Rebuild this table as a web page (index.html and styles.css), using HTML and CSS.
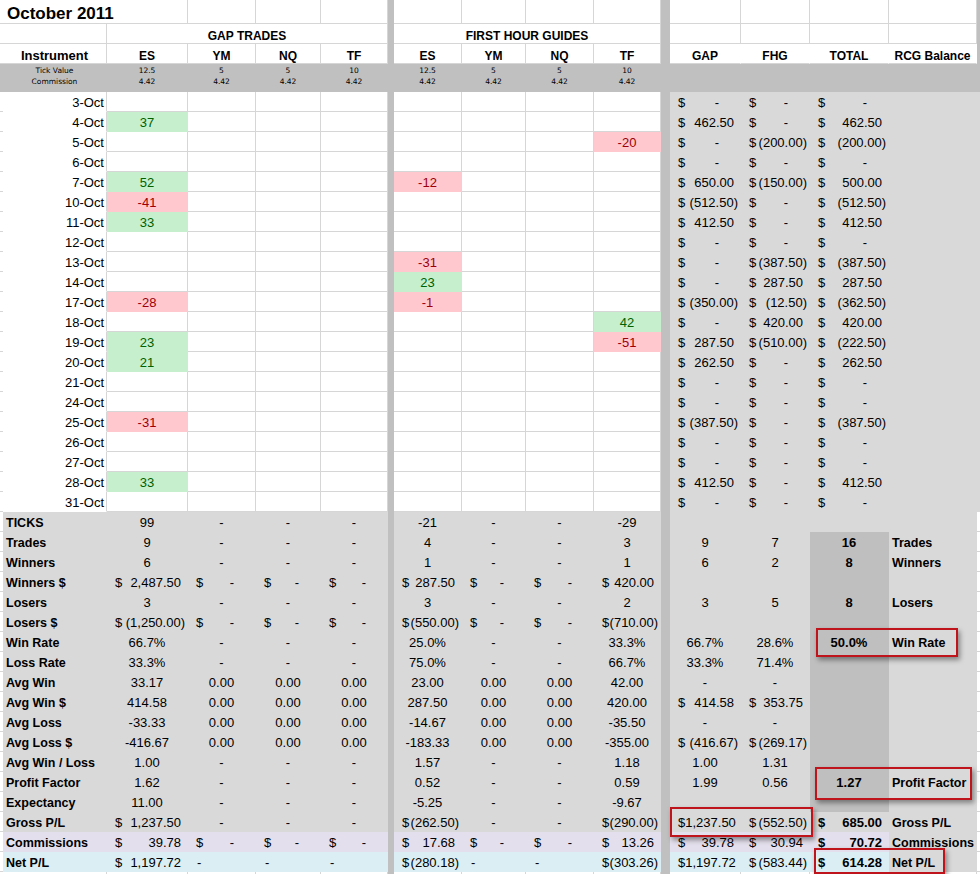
FILE: index.html
```html
<!DOCTYPE html>
<html lang="en">
<head>
<meta charset="utf-8">
<title>October 2011</title>
<link rel="stylesheet" href="styles.css">
</head>
<body>
<div class="wrap">
<div class="sheet">
<div class="sep sepG"></div><div class="sep sepL"></div>

<div class="r h1"><div></div><div class="title">October 2011</div><div></div><div></div><div></div><div></div><div></div><div></div><div></div><div></div><div></div><div></div><div></div><div class="q"></div></div>
<div class="r h2"><div></div><div></div><div class="hb sp4">GAP TRADES</div><div class="hb sp4">FIRST HOUR GUIDES</div><div></div><div></div><div></div><div></div><div class="q"></div></div>
<div class="r h3"><div></div><div class="hb ins">Instrument</div><div class="hb">ES</div><div class="hb">YM</div><div class="hb">NQ</div><div class="hb">TF</div><div class="hb">ES</div><div class="hb">YM</div><div class="hb">NQ</div><div class="hb">TF</div><div class="hb nv">GAP</div><div class="hb nv">FHG</div><div class="hb nv">TOTAL</div><div class="hb nv">RCG Balance</div><div class="q"></div></div>
<div class="r tk"><div></div><div>Tick Value<br>Commission</div><div>12.5<br>4.42</div><div>5<br>4.42</div><div>5<br>4.42</div><div>10<br>4.42</div><div>12.5<br>4.42</div><div>5<br>4.42</div><div>5<br>4.42</div><div>10<br>4.42</div><div class="sp5"></div></div>

<div class="r dr"><div></div><div>3-Oct</div><div></div><div></div><div></div><div></div><div></div><div></div><div></div><div></div><div class="a"><span>$</span><span class="z">-</span></div><div class="a"><span>$</span><span class="z">-</span></div><div class="a"><span>$</span><span class="z">-</span></div><div></div></div>
<div class="r dr"><div></div><div>4-Oct</div><div class="u">37</div><div></div><div></div><div></div><div></div><div></div><div></div><div></div><div class="a"><span>$</span><span class="p">462.50</span></div><div class="a"><span>$</span><span class="z">-</span></div><div class="a"><span>$</span><span class="p">462.50</span></div><div></div></div>
<div class="r dr"><div></div><div>5-Oct</div><div></div><div></div><div></div><div></div><div></div><div></div><div></div><div class="n">-20</div><div class="a"><span>$</span><span class="z">-</span></div><div class="a"><span>$</span><span>(200.00)</span></div><div class="a"><span>$</span><span>(200.00)</span></div><div></div></div>
<div class="r dr"><div></div><div>6-Oct</div><div></div><div></div><div></div><div></div><div></div><div></div><div></div><div></div><div class="a"><span>$</span><span class="z">-</span></div><div class="a"><span>$</span><span class="z">-</span></div><div class="a"><span>$</span><span class="z">-</span></div><div></div></div>
<div class="r dr"><div></div><div>7-Oct</div><div class="u">52</div><div></div><div></div><div></div><div class="n">-12</div><div></div><div></div><div></div><div class="a"><span>$</span><span class="p">650.00</span></div><div class="a"><span>$</span><span>(150.00)</span></div><div class="a"><span>$</span><span class="p">500.00</span></div><div></div></div>
<div class="r dr"><div></div><div>10-Oct</div><div class="n">-41</div><div></div><div></div><div></div><div></div><div></div><div></div><div></div><div class="a"><span>$</span><span>(512.50)</span></div><div class="a"><span>$</span><span class="z">-</span></div><div class="a"><span>$</span><span>(512.50)</span></div><div></div></div>
<div class="r dr"><div></div><div>11-Oct</div><div class="u">33</div><div></div><div></div><div></div><div></div><div></div><div></div><div></div><div class="a"><span>$</span><span class="p">412.50</span></div><div class="a"><span>$</span><span class="z">-</span></div><div class="a"><span>$</span><span class="p">412.50</span></div><div></div></div>
<div class="r dr"><div></div><div>12-Oct</div><div></div><div></div><div></div><div></div><div></div><div></div><div></div><div></div><div class="a"><span>$</span><span class="z">-</span></div><div class="a"><span>$</span><span class="z">-</span></div><div class="a"><span>$</span><span class="z">-</span></div><div></div></div>
<div class="r dr"><div></div><div>13-Oct</div><div></div><div></div><div></div><div></div><div class="n">-31</div><div></div><div></div><div></div><div class="a"><span>$</span><span class="z">-</span></div><div class="a"><span>$</span><span>(387.50)</span></div><div class="a"><span>$</span><span>(387.50)</span></div><div></div></div>
<div class="r dr"><div></div><div>14-Oct</div><div></div><div></div><div></div><div></div><div class="u">23</div><div></div><div></div><div></div><div class="a"><span>$</span><span class="z">-</span></div><div class="a"><span>$</span><span class="p">287.50</span></div><div class="a"><span>$</span><span class="p">287.50</span></div><div></div></div>
<div class="r dr"><div></div><div>17-Oct</div><div class="n">-28</div><div></div><div></div><div></div><div class="n">-1</div><div></div><div></div><div></div><div class="a"><span>$</span><span>(350.00)</span></div><div class="a"><span>$</span><span>(12.50)</span></div><div class="a"><span>$</span><span>(362.50)</span></div><div></div></div>
<div class="r dr"><div></div><div>18-Oct</div><div></div><div></div><div></div><div></div><div></div><div></div><div></div><div class="u">42</div><div class="a"><span>$</span><span class="z">-</span></div><div class="a"><span>$</span><span class="p">420.00</span></div><div class="a"><span>$</span><span class="p">420.00</span></div><div></div></div>
<div class="r dr"><div></div><div>19-Oct</div><div class="u">23</div><div></div><div></div><div></div><div></div><div></div><div></div><div class="n">-51</div><div class="a"><span>$</span><span class="p">287.50</span></div><div class="a"><span>$</span><span>(510.00)</span></div><div class="a"><span>$</span><span>(222.50)</span></div><div></div></div>
<div class="r dr"><div></div><div>20-Oct</div><div class="u">21</div><div></div><div></div><div></div><div></div><div></div><div></div><div></div><div class="a"><span>$</span><span class="p">262.50</span></div><div class="a"><span>$</span><span class="z">-</span></div><div class="a"><span>$</span><span class="p">262.50</span></div><div></div></div>
<div class="r dr"><div></div><div>21-Oct</div><div></div><div></div><div></div><div></div><div></div><div></div><div></div><div></div><div class="a"><span>$</span><span class="z">-</span></div><div class="a"><span>$</span><span class="z">-</span></div><div class="a"><span>$</span><span class="z">-</span></div><div></div></div>
<div class="r dr"><div></div><div>24-Oct</div><div></div><div></div><div></div><div></div><div></div><div></div><div></div><div></div><div class="a"><span>$</span><span class="z">-</span></div><div class="a"><span>$</span><span class="z">-</span></div><div class="a"><span>$</span><span class="z">-</span></div><div></div></div>
<div class="r dr"><div></div><div>25-Oct</div><div class="n">-31</div><div></div><div></div><div></div><div></div><div></div><div></div><div></div><div class="a"><span>$</span><span>(387.50)</span></div><div class="a"><span>$</span><span class="z">-</span></div><div class="a"><span>$</span><span>(387.50)</span></div><div></div></div>
<div class="r dr"><div></div><div>26-Oct</div><div></div><div></div><div></div><div></div><div></div><div></div><div></div><div></div><div class="a"><span>$</span><span class="z">-</span></div><div class="a"><span>$</span><span class="z">-</span></div><div class="a"><span>$</span><span class="z">-</span></div><div></div></div>
<div class="r dr"><div></div><div>27-Oct</div><div></div><div></div><div></div><div></div><div></div><div></div><div></div><div></div><div class="a"><span>$</span><span class="z">-</span></div><div class="a"><span>$</span><span class="z">-</span></div><div class="a"><span>$</span><span class="z">-</span></div><div></div></div>
<div class="r dr"><div></div><div>28-Oct</div><div class="u">33</div><div></div><div></div><div></div><div></div><div></div><div></div><div></div><div class="a"><span>$</span><span class="p">412.50</span></div><div class="a"><span>$</span><span class="z">-</span></div><div class="a"><span>$</span><span class="p">412.50</span></div><div></div></div>
<div class="r dr"><div></div><div>31-Oct</div><div></div><div></div><div></div><div></div><div></div><div></div><div></div><div></div><div class="a"><span>$</span><span class="z">-</span></div><div class="a"><span>$</span><span class="z">-</span></div><div class="a"><span>$</span><span class="z">-</span></div><div></div></div>

<div class="r s"><div></div><div>TICKS</div><div>99</div><div>-</div><div>-</div><div>-</div><div>-21</div><div>-</div><div>-</div><div>-29</div><div></div><div></div><div></div><div></div><div></div></div>
<div class="r s dk"><div></div><div>Trades</div><div>9</div><div>-</div><div>-</div><div>-</div><div>4</div><div>-</div><div>-</div><div>3</div><div>9</div><div>7</div><div>16</div><div>Trades</div><div></div></div>
<div class="r s dk"><div></div><div>Winners</div><div>6</div><div>-</div><div>-</div><div>-</div><div>1</div><div>-</div><div>-</div><div>1</div><div>6</div><div>2</div><div>8</div><div>Winners</div><div></div></div>
<div class="r s dk"><div></div><div>Winners $</div><div class="a"><span>$</span><span class="p">2,487.50</span></div><div class="a"><span>$</span><span class="z">-</span></div><div class="a"><span>$</span><span class="z">-</span></div><div class="a"><span>$</span><span class="z">-</span></div><div class="a"><span>$</span><span class="p">287.50</span></div><div class="a"><span>$</span><span class="z">-</span></div><div class="a"><span>$</span><span class="z">-</span></div><div class="a"><span>$</span><span class="p">420.00</span></div><div></div><div></div><div></div><div></div><div></div></div>
<div class="r s dk"><div></div><div>Losers</div><div>3</div><div>-</div><div>-</div><div>-</div><div>3</div><div>-</div><div>-</div><div>2</div><div>3</div><div>5</div><div>8</div><div>Losers</div><div></div></div>
<div class="r s dk"><div></div><div>Losers $</div><div class="a"><span>$</span><span>(1,250.00)</span></div><div class="a"><span>$</span><span class="z">-</span></div><div class="a"><span>$</span><span class="z">-</span></div><div class="a"><span>$</span><span class="z">-</span></div><div class="a"><span>$</span><span>(550.00)</span></div><div class="a"><span>$</span><span class="z">-</span></div><div class="a"><span>$</span><span class="z">-</span></div><div class="a"><span>$</span><span>(710.00)</span></div><div></div><div></div><div></div><div></div><div></div></div>
<div class="r s dk"><div></div><div>Win Rate</div><div>66.7%</div><div>-</div><div>-</div><div>-</div><div>25.0%</div><div>-</div><div>-</div><div>33.3%</div><div>66.7%</div><div>28.6%</div><div>50.0%</div><div>Win Rate</div><div></div></div>
<div class="r s dk"><div></div><div>Loss Rate</div><div>33.3%</div><div>-</div><div>-</div><div>-</div><div>75.0%</div><div>-</div><div>-</div><div>66.7%</div><div>33.3%</div><div>71.4%</div><div></div><div></div><div></div></div>
<div class="r s dk"><div></div><div>Avg Win</div><div>33.17</div><div>0.00</div><div>0.00</div><div>0.00</div><div>23.00</div><div>0.00</div><div>0.00</div><div>42.00</div><div>-</div><div>-</div><div></div><div></div><div></div></div>
<div class="r s dk"><div></div><div>Avg Win $</div><div>414.58</div><div>0.00</div><div>0.00</div><div>0.00</div><div>287.50</div><div>0.00</div><div>0.00</div><div>420.00</div><div class="a"><span>$</span><span class="p">414.58</span></div><div class="a"><span>$</span><span class="p">353.75</span></div><div></div><div></div><div></div></div>
<div class="r s dk"><div></div><div>Avg Loss</div><div>-33.33</div><div>0.00</div><div>0.00</div><div>0.00</div><div>-14.67</div><div>0.00</div><div>0.00</div><div>-35.50</div><div>-</div><div>-</div><div></div><div></div><div></div></div>
<div class="r s dk"><div></div><div>Avg Loss $</div><div>-416.67</div><div>0.00</div><div>0.00</div><div>0.00</div><div>-183.33</div><div>0.00</div><div>0.00</div><div>-355.00</div><div class="a"><span>$</span><span>(416.67)</span></div><div class="a"><span>$</span><span>(269.17)</span></div><div></div><div></div><div></div></div>
<div class="r s dk"><div></div><div>Avg Win / Loss</div><div>1.00</div><div>-</div><div>-</div><div>-</div><div>1.57</div><div>-</div><div>-</div><div>1.18</div><div>1.00</div><div>1.31</div><div></div><div></div><div></div></div>
<div class="r s dk"><div></div><div>Profit Factor</div><div>1.62</div><div>-</div><div>-</div><div>-</div><div>0.52</div><div>-</div><div>-</div><div>0.59</div><div>1.99</div><div>0.56</div><div>1.27</div><div>Profit Factor</div><div></div></div>
<div class="r s dk"><div></div><div>Expectancy</div><div>11.00</div><div>-</div><div>-</div><div>-</div><div>-5.25</div><div>-</div><div>-</div><div>-9.67</div><div></div><div></div><div></div><div></div><div></div></div>
<div class="r s"><div></div><div>Gross P/L</div><div class="a"><span>$</span><span class="p">1,237.50</span></div><div>-</div><div>-</div><div>-</div><div class="a"><span>$</span><span>(262.50)</span></div><div>-</div><div>-</div><div class="a"><span>$</span><span>(290.00)</span></div><div class="a"><span>$</span><span class="p">1,237.50</span></div><div class="a"><span>$</span><span>(552.50)</span></div><div class="a"><span>$</span><span class="p">685.00</span></div><div>Gross P/L</div><div></div></div>
<div class="r s cm"><div></div><div>Commissions</div><div class="a"><span>$</span><span class="p">39.78</span></div><div class="a"><span>$</span><span class="z">-</span></div><div class="a"><span>$</span><span class="z">-</span></div><div class="a"><span>$</span><span class="z">-</span></div><div class="a"><span>$</span><span class="p">17.68</span></div><div class="a"><span>$</span><span class="z">-</span></div><div class="a"><span>$</span><span class="z">-</span></div><div class="a"><span>$</span><span class="p">13.26</span></div><div class="a"><span>$</span><span class="p">39.78</span></div><div class="a"><span>$</span><span class="p">30.94</span></div><div class="a"><span>$</span><span class="p">70.72</span></div><div>Commissions</div><div></div></div>
<div class="r s nt"><div></div><div>Net P/L</div><div class="a"><span>$</span><span class="p">1,197.72</span></div><div class="lf">-</div><div class="lf">-</div><div class="lf">-</div><div class="a"><span>$</span><span>(280.18)</span></div><div class="lf">-</div><div class="lf">-</div><div class="a"><span>$</span><span>(303.26)</span></div><div class="a"><span>$</span><span class="p">1,197.72</span></div><div class="a"><span>$</span><span>(583.44)</span></div><div class="a"><span>$</span><span class="p">614.28</span></div><div>Net P/L</div><div></div></div>

<div class="r last"><div></div><div></div><div></div><div></div><div></div><div></div><div></div><div></div><div></div><div></div><div></div><div></div><div></div><div></div><div></div></div>
</div>

<div class="box b1"></div>
<div class="box b2"></div>
<div class="box b3"></div>
<div class="box b4"></div>
</div>
</body>
</html>
```

FILE: styles.css
```css
html, body {
  margin: 0;
  padding: 0;
  background: #ffffff;
}
body {
  font-family: "Liberation Sans", Arial, sans-serif;
  font-size: 13px;
  color: #000;
}
.wrap {
  position: relative;
  width: 980px;
  height: 874px;
  overflow: hidden;
}
.sheet {
  display: grid;
  grid-template-columns: 3px 104px 81px 68px 65px 67px 6px 68px 64px 68px 67px 9px 71px 69px 79px 88px 3px;
  grid-template-rows: 24px 20px 20px 28px repeat(39, 20px) 2px;
}
.sheet div {
  box-sizing: border-box;
  border-right: 1px solid #d6d6d6;
  border-bottom: 1px solid #d6d6d6;
  white-space: nowrap;
  line-height: 20px;
  text-align: center;
  padding: 1px 2px 0;
  background: #fff;
}
.sheet .r { display: contents; }

.sheet .sep {
  grid-row: 1 / 45;
  background: #c0c0c0;
  border-color: transparent;
}
.sheet .sepG { grid-column: 7; }
.sheet .sepL { grid-column: 12; }
.sheet .q {
  background: #c0c0c0;
  border-color: transparent;
}
.sheet .sp4 { grid-column: span 4; }
.sheet .sp5 { grid-column: span 5; }

.sheet .title {
  grid-column: span 2;
  text-align: left;
  font-weight: bold;
  font-size: 17px;
  line-height: 24px;
  padding: 2px 0 0 4px;
}
.sheet .hb {
  font-weight: bold;
  font-size: 12px;
  padding-top: 2px;
}
.sheet .ins { font-size: 13px; }
.sheet .nv { border-right-color: transparent; }

/* tick value row */
.sheet .tk > div {
  background: #c0c0c0;
  border-color: transparent;
  font-family: "DejaVu Sans", Verdana, sans-serif;
  font-size: 7.5px;
  line-height: 11px;
  padding-top: 1px;
}

/* daily rows */
.sheet .dr > div:nth-child(2) {
  text-align: right;
  border-bottom-color: #fff;
}
.sheet .dr > div:nth-child(n+11) {
  background: #d9d9d9;
  border-color: transparent;
}
.sheet .dr > div:nth-child(14) { grid-column: span 2; }

.sheet .u {
  background: #c6efce;
  color: #006100;
  border-color: transparent;
}
.sheet .n {
  background: #ffc7ce;
  color: #9c0006;
  border-color: transparent;
}

/* accounting number cells */
.sheet .a {
  display: flex;
  justify-content: space-between;
  padding: 1px 2px 0 8px;
  text-align: left;
}
.sheet .a .p { padding-right: 4px; }
.sheet .a .z { padding-right: 19px; }
.sheet .lf {
  text-align: left;
  padding-left: 9px;
}

/* summary rows */
.sheet .s > div {
  background: #d9d9d9;
  border-color: transparent;
}
.sheet .s > div:first-child,
.sheet .s > div:last-child {
  background: #fff;
  border-color: #d6d6d6;
}
.sheet .s > div:nth-child(2),
.sheet .s > div:nth-child(14) {
  text-align: left;
  font-weight: bold;
  font-size: 12.5px;
  padding-left: 3px;
}
.sheet .s > div:nth-child(13) { font-weight: bold; }
.sheet .dk > div:nth-child(13) { background: #bfbfbf; }
.sheet .cm > div:nth-child(n+2):nth-child(-n+13) { background: #e4dfec; }
.sheet .nt > div:nth-child(n+2):nth-child(-n+13) { background: #daeef3; }

.sheet .last > div { border-bottom: none; }

/* red callout boxes */
.box {
  position: absolute;
  box-sizing: border-box;
  border: 2px solid #c0141c;
  box-shadow: 2px 3px 5px rgba(0, 0, 0, 0.4);
}
.b1 { left: 816px; top: 628px; width: 142px; height: 29px; }
.b2 { left: 815px; top: 767px; width: 157px; height: 33px; }
.b3 { left: 670px; top: 807px; width: 143px; height: 30px; }
.b4 { left: 814px; top: 848px; width: 131px; height: 26px; }
```
